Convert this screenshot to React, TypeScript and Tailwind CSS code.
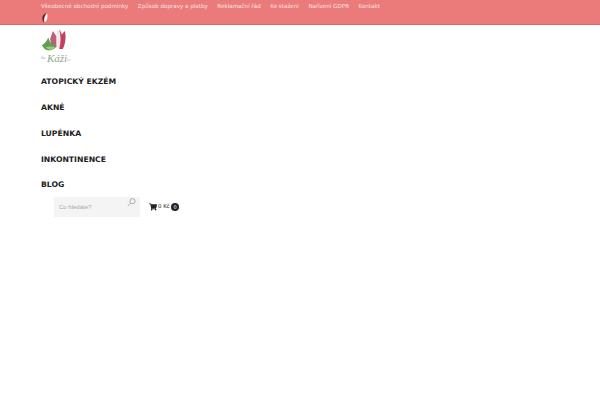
import { FaShoppingCart } from "react-icons/fa";

const top = ["Všeobecné obchodní podmínky", "Způsob dopravy a platby", "Reklamační řád", "Ke stažení", "Nařízení GDPR", "Kontakt"];
const nav = ["ATOPICKÝ EKZÉM", "AKNÉ", "LUPÉNKA", "INKONTINENCE", "BLOG"];

function Logo() {
  return (
    <div className="relative h-[41px] w-[33px]">
      <svg width="30" height="24" viewBox="0 0 33 26" className="block">
        <path d="M10 12 L13 3 L17 9 L17 21 L12 21Z" fill="#b9607a" />
        <path d="M23 3 L18 2 L17 6 L18 22 L21 22Z" fill="#f6e6ea" />
        <path d="M20 1 L23 7 L26 3 C28 8 27 17 24 23 L20 23 C22 16 22 8 20 1Z" fill="#c2415f" />
        <path d="M1 19 C3 17 6 16 8 10 C9 14 11 18 17 20 C15 24 8 26 4 23Z" fill="#5fa04e" />
        <path d="M5 21 C9 20 12 20 16 21 C12 25 8 24 5 21Z" fill="#9cc98a" />
      </svg>
      <span className="absolute left-0 top-[28px] font-['Liberation_Serif',serif] text-[4px] leading-[4px] text-[#9ab09a]">the</span>
      <span className="absolute left-[6px] top-[25px] font-['Liberation_Serif',serif] text-[11px] leading-[11px] italic text-[#8aa88a]">Káži</span>
      <span className="absolute left-[26px] top-[30px] font-['Liberation_Serif',serif] text-[3.5px] leading-[4px] text-[#9ab09a]">s.r.</span>
    </div>
  );
}

export default function App() {
  return (
    <div className="min-h-[400px] bg-white font-['DejaVu_Sans',sans-serif]">
      <header className="h-[25px] border-b border-[#d96a6c] bg-[#eb7b7b] pl-[41px]">
        <div className="flex h-[14px] items-center gap-[9.5px] text-[5.6px] leading-none text-[#fbe3e3]">
          {top.map((t) => (
            <span key={t}>{t}</span>
          ))}
        </div>
        <svg width="8" height="10" viewBox="0 0 8 10" className="-mt-[1px] block">
          <path d="M6 0 C1 1 0 6 3 10 C2.5 6 3 3 6 0Z" fill="#5a2426" />
          <path d="M6 0 C3.5 3 3 6 3.5 9 C6 9 7 3 6 0Z" fill="#ffffff" />
        </svg>
      </header>
      <div className="pl-[41px] pt-[3px]">
        <Logo />
      </div>
      <nav className="flex flex-col pl-[41px]">
        {nav.map((n) => (
          <div key={n} className="flex h-[26px] items-center text-[7.7px] font-bold text-[#222222] last:h-[24px]">
            {n}
          </div>
        ))}
      </nav>
      <div className="flex items-center pl-[54px]">
        <div className="flex h-[20px] w-[86px] items-start justify-between bg-[#f4f4f4] pl-[5px] pr-[4px]">
          <span className="mt-[6px] font-['Liberation_Sans',sans-serif] text-[6px] leading-[9px] text-[#a8a8a8]">Co hledáte?</span>
          <svg width="9" height="9" viewBox="0 0 9 9" className="mt-[1px]" fill="none" stroke="#999999" strokeWidth="0.8">
            <circle cx="5.5" cy="3.2" r="2.6" />
            <path d="M3.6 5.1 L0.8 8" />
          </svg>
        </div>
        <div className="ml-[9px] flex items-center text-[#222222]">
          <FaShoppingCart className="h-[8px] w-[8px]" />
          <span className="ml-[1px] text-[5.5px] leading-none">0 Kč</span>
          <span className="ml-[1.5px] flex h-[7.5px] w-[7.5px] items-center justify-center rounded-full bg-[#222222] text-[5px] leading-none text-white">0</span>
        </div>
      </div>
    </div>
  );
}
